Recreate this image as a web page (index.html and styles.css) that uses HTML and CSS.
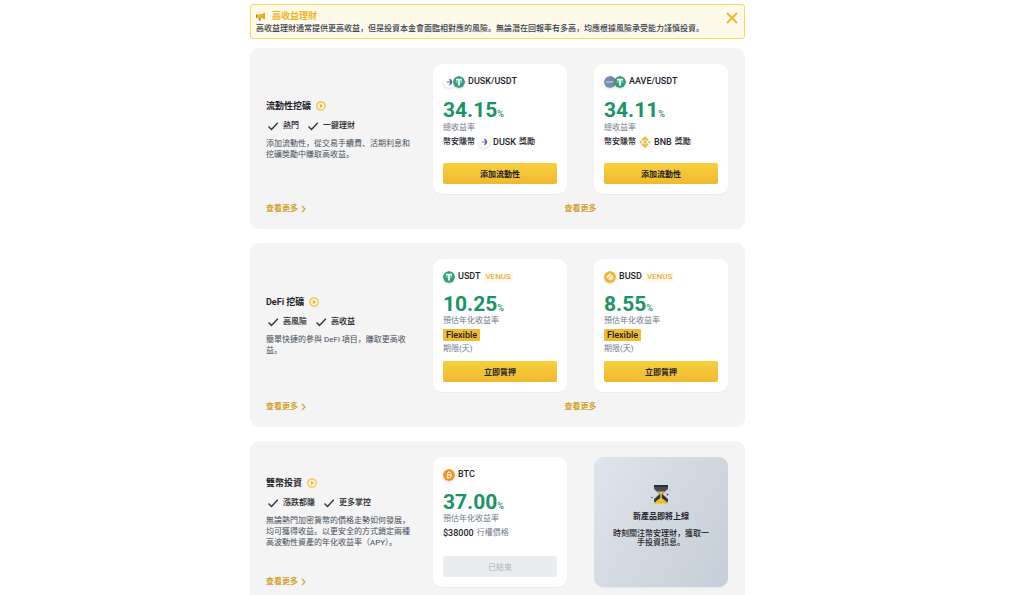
FILE: index.html
```html
<!DOCTYPE html>
<html lang="zh">
<head>
    <meta charset="UTF-8">
    <meta name="viewport" content="width=device-width, initial-scale=1.0">
    <title>高收益理財</title>
    <link rel="stylesheet" href="styles.css">
</head>
<body>

    <!-- Shared icons -->
    <svg class="sprite" aria-hidden="true">
        <symbol id="check" viewBox="0 0 12 10"><path d="M1.5 5.5 4.5 8.5 10.8 1.8" fill="none" stroke="#2b3038" stroke-width="1.3"/></symbol>
        <symbol id="play" viewBox="0 0 10 10"><circle cx="5" cy="5" r="4.2" fill="none" stroke="#f3c23c" stroke-width="1.3"/><path d="M3.900 2.800 7.200 5 3.900 7.200z" fill="#f0b90b"/></symbol>
        <symbol id="arrow" viewBox="0 0 5 8"><path d="M1 1 4 4 1 7" fill="none" stroke="#d3a12f" stroke-width="1.1"/></symbol>
        <symbol id="usdt" viewBox="0 0 12 12"><circle cx="6" cy="6" r="6" fill="#2ea07b"/><path d="M3 2.8h6v1.7H6.9v4.9H5.1V4.5H3z" fill="#fff"/><path d="M2.6 5.9c0-1 6.8-1 6.8 0s-6.8 1-6.8 0z" fill="none" stroke="#fff" stroke-width=".4"/></symbol>
        <symbol id="dusk" viewBox="0 0 12 12"><circle cx="6" cy="6" r="6" fill="#fff"/><path d="M5.500 2.500c5 .4 5 6.600 0 7C7.600 7.800 7.600 4.400 5.500 2.500zM3.800 5.600h3v.8h-3z" fill="#5a6aa5"/></symbol>
        <symbol id="aave" viewBox="0 0 12 12"><circle cx="6" cy="6" r="6" fill="#6f8fb2"/><path d="M6 0a6 6 0 0 1 4 10.500z" fill="#8b7e9c"/><path d="M2 7 3 5l1 2 1-2 1 2 1-2 1 2 1-2" fill="none" stroke="#c3d3e2" stroke-width=".7"/></symbol>
        <symbol id="bnb" viewBox="0 0 12 12"><path d="M6 4.300 7.700 6 6 7.700 4.300 6zM6 .2 9.400 3.600 8 5 6 3 4 5 2.600 3.600zM6 11.800 2.600 8.400 4 7l2 2 2-2 1.400 1.400zM1.600 4.600 3 6 1.600 7.400.2 6zM10.400 4.600 11.800 6l-1.400 1.400L9 6z" fill="#f3ba2f"/></symbol>
        <symbol id="busd" viewBox="0 0 12 12"><circle cx="6" cy="6" r="6" fill="#f0b52c"/><path d="M6 2.200 7.200 3.400 3.400 7.200 2.200 6zM7.900 4.100l1.200 1.200-3.800 3.800-1.200-1.200zM9 6.200l.8.8L7 9.800 6.200 9z" fill="#fff"/></symbol>
        <symbol id="btc" viewBox="0 0 12 12"><circle cx="6" cy="6" r="6" fill="#f7931a"/><path d="M4.900 3.400h1.800c2 0 2 2.500 0 2.500H4.800h2c2.200 0 1.800 2.700-.4 2.700H4l.9-5.200zM6 2.400l-.2 1M5.200 8.600l-.2 1" fill="none" stroke="#fff" stroke-width="1"/></symbol>
    </svg>

    <main class="container">
        <!-- Risk notice -->
        <section class="notice">
            <div class="notice-text">
                <h1>
                    <svg class="horn" viewBox="0 0 10 9" aria-hidden="true"><path d="M1 2.500 6 2V6.200L1 5.800z" fill="#f0b90b"/><path d="M6 2 9 .5v7L6 6.200z" fill="#eaad1c"/><path d="M0 2.500h1v3.300H0zM2.400 6h2l.6 2.600H3.200z" fill="#76808f"/></svg>
                    高收益理財
                </h1>
                <p>高收益理財通常提供更高收益，但是投資本金會面臨相對應的風險。無論潛在回報率有多高，均應根據風險承受能力謹慎投資。</p>
            </div>
            <button class="close" type="button" aria-label="關閉">
                <svg viewBox="0 0 12 12"><path d="M1 1 11 11M11 1 1 11" stroke="#f0b92d" stroke-width="1.800"/></svg>
            </button>
        </section>

        <!-- Liquidity farming -->
        <section class="panel">
            <div class="intro">
                <h2>流動性挖礦 <svg class="play"><use href="#play"/></svg></h2>
                <ul class="tags">
                    <li><svg><use href="#check"/></svg>熱門</li>
                    <li><svg><use href="#check"/></svg>一鍵理財</li>
                </ul>
                <p>添加流動性，從交易手續費、活期利息和挖礦獎勵中賺取高收益。</p>
            </div>
            <div class="cards">
                <article class="card farm">
                    <h3><span class="pair"><svg class="coin"><use href="#dusk"/></svg><svg class="coin"><use href="#usdt"/></svg></span>DUSK/USDT</h3>
                    <div class="rate">34.15<small>%</small></div>
                    <div class="label">總收益率</div>
                    <div class="detail">幣安賺幣 <svg class="coin"><use href="#dusk"/></svg> <span class="symbol">DUSK</span> 獎勵</div>
                    <button class="btn" type="button">添加流動性</button>
                </article>
                <article class="card farm">
                    <h3><span class="pair"><svg class="coin"><use href="#aave"/></svg><svg class="coin"><use href="#usdt"/></svg></span>AAVE/USDT</h3>
                    <div class="rate">34.11<small>%</small></div>
                    <div class="label">總收益率</div>
                    <div class="detail">幣安賺幣 <svg class="coin"><use href="#bnb"/></svg> <span class="symbol">BNB</span> 獎勵</div>
                    <button class="btn" type="button">添加流動性</button>
                </article>
            </div>
            <a class="more" href="#">查看更多<svg><use href="#arrow"/></svg></a>
            <a class="more center" href="#">查看更多</a>
        </section>

        <!-- DeFi staking -->
        <section class="panel">
            <div class="intro">
                <h2>DeFi 挖礦 <svg class="play"><use href="#play"/></svg></h2>
                <ul class="tags">
                    <li><svg><use href="#check"/></svg>高風險</li>
                    <li><svg><use href="#check"/></svg>高收益</li>
                </ul>
                <p>簡單快捷的參與 DeFi 項目，賺取更高收益。</p>
            </div>
            <div class="cards">
                <article class="card">
                    <h3><svg class="coin"><use href="#usdt"/></svg>USDT <span class="venue">VENUS</span></h3>
                    <div class="rate">10.25<small>%</small></div>
                    <div class="label">預估年化收益率</div>
                    <div class="detail"><span class="badge">Flexible</span></div>
                    <div class="label term">期限(天)</div>
                    <button class="btn" type="button">立即質押</button>
                </article>
                <article class="card">
                    <h3><svg class="coin"><use href="#busd"/></svg>BUSD <span class="venue">VENUS</span></h3>
                    <div class="rate">8.55<small>%</small></div>
                    <div class="label">預估年化收益率</div>
                    <div class="detail"><span class="badge">Flexible</span></div>
                    <div class="label term">期限(天)</div>
                    <button class="btn" type="button">立即質押</button>
                </article>
            </div>
            <a class="more" href="#">查看更多<svg><use href="#arrow"/></svg></a>
            <a class="more center" href="#">查看更多</a>
        </section>

        <!-- Dual investment -->
        <section class="panel">
            <div class="side">
                <div class="intro">
                    <h2>雙幣投資 <svg class="play"><use href="#play"/></svg></h2>
                    <ul class="tags">
                        <li><svg><use href="#check"/></svg>漲跌都賺</li>
                        <li><svg><use href="#check"/></svg>更多掌控</li>
                    </ul>
                    <p>無論熱門加密貨幣的價格走勢如何發展，均可獲得收益。以更安全的方式鎖定兩種高波動性資產的年化收益率（APY）。</p>
                </div>
                <a class="more" href="#">查看更多<svg><use href="#arrow"/></svg></a>
            </div>
            <div class="cards">
                <article class="card">
                    <h3><svg class="coin"><use href="#btc"/></svg>BTC</h3>
                    <div class="rate">37.00<small>%</small></div>
                    <div class="label">預估年化收益率</div>
                    <div class="detail"><span class="symbol">$38000</span> <span class="muted">行權價格</span></div>
                    <button class="btn" type="button" disabled>已結束</button>
                </article>
                <article class="card soon">
                    <svg class="hourglass" viewBox="0 0 20 20" aria-hidden="true">
                        <path d="M3 1h14v4l-5.500 5 5.500 5v4H3v-4l5.500-5L3 5z" fill="#474d57"/>
                        <path d="M3 1h14v2H3z" fill="#2b3038"/>
                        <path d="M6 7.500h8L10.700 10.300V14L15 17v2H5v-2l4.300-3v-3.700z" fill="#f3bd2b"/>
                        <path d="M3 18h14v1.500H3z" fill="#f0b90b"/>
                        <path d="M5 14.500l3.500-3.300v3L4 17.500zM15 14.500l-3.500-3.300v3l4.500 3.300z" fill="#2b3038"/>
                        <circle cx="1" cy="13.500" r=".7" fill="#474d57"/><circle cx="16.500" cy="10.500" r=".9" fill="#474d57"/><circle cx="19" cy="6" r=".5" fill="#76808f"/>
                    </svg>
                    <h3>新產品即將上線</h3>
                    <p>時刻關注幣安理財，獲取一手投資訊息。</p>
                </article>
            </div>
        </section>
    </main>

</body>
</html>
```
FILE: styles.css
```css
/* Global */
* {
    box-sizing: border-box;
}

body {
    margin: 0;
    padding: 4px 29px 16px 0;
    font-family: Roboto, "Noto Sans CJK SC", sans-serif;
    font-size: 8px;
    line-height: 12px;
    color: #1e2329;
    background: #ffffff;
}

h1, h2, h3, p, ul {
    margin: 0;
    padding: 0;
}

button {
    font-family: inherit;
    border: none;
    cursor: pointer;
}

.sprite {
    position: absolute;
    width: 0;
    height: 0;
}

.container {
    max-width: 495px;
    margin: 0 auto;
}

/* Notice */
.notice {
    display: flex;
    justify-content: space-between;
    align-items: flex-start;
    padding: 4px 6px 3px 5px;
    margin-bottom: 9px;
    border: 1px solid #fbd95f;
    border-radius: 3px;
    background: #fefaea;
}

.notice h1 {
    display: flex;
    align-items: center;
    gap: 6px;
    font-size: 9px;
    line-height: 14px;
    color: #eeb52c;
}

.notice p {
    font-weight: 500;
    color: #3b4048;
}

.horn {
    width: 10px;
    height: 9px;
}

.close {
    padding: 3px 0;
    background: none;
    line-height: 0;
}

.close svg {
    width: 12px;
    height: 12px;
}

/* Product panels */
.panel {
    display: grid;
    grid-template-columns: 1fr 295px;
    row-gap: 9px;
    padding: 16px 17px 15px 16px;
    margin-bottom: 14px;
    border-radius: 9px;
    background: #f4f4f4;
}

.side {
    display: flex;
    flex-direction: column;
    gap: 9px;
}

.intro {
    flex: 1;
    display: flex;
    flex-direction: column;
    justify-content: center;
    padding-right: 22px;
}

.intro h2 {
    display: flex;
    align-items: center;
    gap: 5px;
    font-size: 9px;
    line-height: 14px;
}

.play {
    width: 10px;
    height: 10px;
}

.intro p {
    line-height: 11px;
    color: #474d57;
}

.tags {
    display: flex;
    gap: 8px;
    margin: 7px 0 6px;
    padding-left: 1px;
    list-style: none;
    font-weight: 500;
}

.tags li {
    display: flex;
    align-items: center;
    gap: 4px;
}

.tags svg {
    width: 12px;
    height: 10px;
}

.more {
    display: flex;
    align-items: center;
    gap: 3px;
    line-height: 11px;
    font-weight: bold;
    color: #d3a12f;
    text-decoration: none;
}

.more svg {
    width: 5px;
    height: 8px;
}

.more.center {
    justify-content: center;
}

/* Cards */
.cards {
    display: flex;
    justify-content: space-between;
}

.card {
    display: flex;
    flex-direction: column;
    width: 134px;
    min-height: 130px;
    padding: 10px;
    border-radius: 9px;
    background: #ffffff;
    box-shadow: 0 1px 1px rgba(0, 0, 0, 0.04);
}

.card h3 {
    display: flex;
    align-items: center;
    gap: 3px;
    font-size: 9px;
    line-height: 15px;
    font-weight: 500;
}

.coin {
    width: 12px;
    height: 12px;
    border-radius: 50%;
    filter: drop-shadow(0 1px 1px rgba(0, 0, 0, 0.15));
}

.pair {
    display: flex;
}

.pair .coin + .coin {
    margin-left: -2px;
}

.rate {
    display: flex;
    align-items: baseline;
    margin-top: 9px;
    font-size: 21px;
    line-height: 22px;
    font-weight: bold;
    color: #1a9366;
}

.rate small {
    font-size: 9px;
    line-height: 12px;
    font-weight: 500;
}

.label {
    color: #707a8a;
}

.farm .rate {
    margin-top: 10px;
}

.farm .label {
    margin-top: 1px;
}

.detail {
    display: flex;
    align-items: center;
    gap: 3px;
    margin-top: 2px;
    font-weight: 500;
}

.symbol {
    font-size: 9px;
}

.term {
    margin-top: 2px;
    margin-bottom: 6px;
}

.muted {
    font-weight: normal;
    color: #707a8a;
}

.venue {
    padding: 0 2px;
    font-size: 8px;
    line-height: 10px;
    font-weight: normal;
    color: #dca032;
    background: #fefaea;
}

.badge {
    padding: 0 3px;
    border-radius: 1px;
    font-size: 9px;
    background: #f0bb2f;
}

.btn {
    margin-top: auto;
    height: 21px;
    padding: 0;
    border-radius: 2px;
    font-size: 8px;
    font-weight: bold;
    color: #1e2329;
    background: linear-gradient(#f7d03e, #f0b92f);
}

.btn:disabled {
    font-weight: normal;
    color: #aeb4bc;
    background: #eaecef;
    cursor: default;
}

/* Coming soon card */
.soon {
    align-items: center;
    justify-content: center;
    text-align: center;
    padding: 2px 18px 16px;
    background: linear-gradient(120deg, #e0e5ed, #d0d6de 60%, #c5ced9);
}

.soon h3 {
    margin: 5px 0;
    font-size: 8px;
    font-weight: bold;
}

.soon p {
    line-height: 9px;
    font-weight: 500;
}

.hourglass {
    width: 20px;
    height: 20px;
}

/* Small screens */
@media (max-width: 520px) {
    body {
        padding: 4px 8px;
    }

    .panel {
        grid-template-columns: 1fr;
    }
}
```
